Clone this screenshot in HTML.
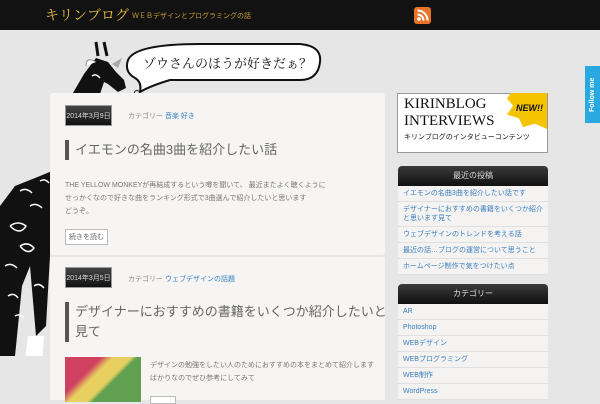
<!DOCTYPE html>
<html><head><meta charset="utf-8"><style>
*{margin:0;padding:0;box-sizing:border-box}
body{width:600px;height:400px;overflow:hidden;background:#e6e6e6;font-family:"Liberation Sans","Noto Sans CJK JP",sans-serif;position:relative}
.hdr{position:absolute;left:0;top:0;width:600px;height:30px;background:#121212}
.logo{position:absolute;left:45px;top:5px;color:#e8c040;font-family:"Liberation Serif","Noto Serif CJK SC",serif;font-size:14px;white-space:nowrap}
.tag{position:absolute;left:132px;top:11px;color:#c8a030;font-size:7px;white-space:nowrap}
.rss{position:absolute;left:414px;top:7px;width:17px;height:17px;background:#e8742a;border-radius:3px}
.box{position:absolute;left:50px;background:#f6f5f3;width:335px}
.date{position:absolute;background:linear-gradient(#444,#111);color:#ddd;font-size:7px;width:47px;height:21px;line-height:21px;text-align:center;border:1px solid #999;white-space:nowrap}
.meta{position:absolute;font-size:7px;color:#888;white-space:nowrap}
.meta a{color:#3a7ec0}
.ttl{position:absolute;border-left:4px solid #555;padding-left:6px;font-size:13px;color:#666;line-height:20px;white-space:nowrap}
.txt{position:absolute;font-size:7px;color:#777;line-height:13px;white-space:nowrap}
.btn{position:absolute;border:1px solid #bbb;font-size:7px;color:#666;padding:2px 3px;background:#fff;white-space:nowrap}
.wh{position:absolute;left:398px;width:150px;height:20px;background:linear-gradient(#3a3a3a,#111);border-radius:4px 4px 0 0;color:#ddd;font-size:8px;text-align:center;line-height:20px}
.wl{position:absolute;left:398px;width:150px;background:#f4f3f1}
.wl div{border-bottom:1px solid #e0e0e0;font-size:7px;color:#3a7ec0;padding:3px 5px;line-height:9px;white-space:nowrap}
</style></head><body>
<div class="hdr"></div>
<div class="logo">キリンブログ</div>
<div class="tag">ＷＥＢデザインとプログラミングの話</div>
<div class="rss"><svg width="17" height="17"><circle cx="5" cy="12" r="1.8" fill="#fff"/><path d="M3.5 7.5a6 6 0 0 1 6 6M3.5 3.5a10 10 0 0 1 10 10" stroke="#fff" stroke-width="2" fill="none"/></svg></div>
<svg style="position:absolute;left:0;top:36px" width="330" height="320">
<path d="M128 24 Q135 8 200 8 L300 8 Q322 10 320 26 Q318 44 300 44 L170 44 Q150 50 140 56 Q142 46 135 42 Q124 36 128 24Z" fill="#fff" stroke="#111" stroke-width="2"/>
<text x="143" y="32" font-family="Noto Serif CJK SC,serif" font-size="13" fill="#111">ゾウさんのほうが好きだぁ？</text>
<circle cx="126" cy="62" r="2" fill="none" stroke="#111"/><circle cx="131" cy="60" r="2" fill="none" stroke="#111"/><circle cx="137" cy="57" r="2.5" fill="none" stroke="#111"/>
<path d="M96 22 L108 26 L116 36 L124 44 L126 52 L118 56 L108 48 L104 46 L96 70 L75 100 L60 125 L52 135 L40 140 L15 150 L0 170 L0 330 L14 330 L22 250 L30 230 L36 300 L46 290 L50 220 L50 140 L70 62 L84 38 Z" fill="#111"/>
<path d="M104 6l3 14M96 6l2 14" stroke="#111" stroke-width="3"/>
<path d="M86 30 Q86 20 96 26" fill="#fff" stroke="#888"/>
<path d="M112 28 l10 -6 l-4 10z" fill="#aaa"/>
<path d="M10 190 q8 -6 16 0 q-6 10 -16 0 M20 210 q8 -5 14 2 q-6 8 -14 -2 M5 230 q6 -4 12 2 M30 170 q6 -4 12 2 M8 260 q6 -4 10 2 M34 250 q5 -4 10 2 M80 60 q5 -3 8 2 M70 80 q5 -3 9 2 M62 100 q5 -3 8 2 M20 155 q6 -4 12 2 M40 145 q5 -3 9 2 M15 280 q5 -3 9 2 M92 40 q4 -3 8 2" stroke="#fff" stroke-width="1.5" fill="none"/>
<path d="M28 300 l16 0 l-2 30 l-18 0z" fill="#fff"/>
</svg>
<div class="box" style="top:93px;height:162px;border-radius:3px">
<div class="date" style="left:15px;top:12px">2014年3月9日</div>
<div class="meta" style="left:78px;top:18px">カテゴリー <a>音楽 好き</a></div>
<div class="ttl" style="left:15px;top:47px">イエモンの名曲3曲を紹介したい話</div>
<div class="txt" style="left:15px;top:86px">THE YELLOW MONKEYが再結成するという噂を聞いて、 最近またよく聴くように<br>せっかくなので好きな曲をランキング形式で3曲選んで紹介したいと思います<br>どうぞ。</div>
<div class="btn" style="left:15px;top:136px">続きを読む</div>
</div>
<div class="box" style="top:257px;height:143px">
<div class="date" style="left:15px;top:10px">2014年3月5日</div>
<div class="meta" style="left:78px;top:17px">カテゴリー <a>ウェブデザインの話題</a></div>
<div class="ttl" style="left:15px;top:45px">デザイナーにおすすめの書籍をいくつか紹介したいと<br>見て</div>
<div style="position:absolute;left:15px;top:100px;width:76px;height:45px;background:linear-gradient(135deg,#d04060 30%,#e8d060 40%,#e8d060 55%,#60a050 60%)"></div>
<div class="txt" style="left:100px;top:102px">デザインの勉強をしたい人のためにおすすめの本をまとめて紹介します<br>ばかりなのでぜひ参考にしてみて</div>
<div class="btn" style="left:100px;top:139px;width:26px;height:8px"></div>
</div>
<div style="position:absolute;left:397px;top:93px;width:151px;height:60px;background:#fff;border:1px solid #999;font-family:'Liberation Serif',serif;font-size:15px;line-height:17px;padding:2px 6px;color:#111">KIRINBLOG<br>INTERVIEWS<div style="font-family:'Noto Sans CJK JP',sans-serif;font-size:7px;line-height:14px">キリンブログのインタビューコンテンツ</div></div>
<div style="position:absolute;left:507px;top:93px;width:40px;height:36px;background:#f4c400;clip-path:polygon(10% 0,100% 0,100% 100%,70% 85%,40% 95%,30% 70%,0 60%,15% 35%,0 15%);font:bold italic 9px 'Liberation Sans';color:#111;padding:10px 0 0 9px">NEW!!</div>
<div class="wh" style="top:166px">最近の投稿</div>
<div class="wl" style="top:186px;height:88px">
<div>イエモンの名曲3曲を紹介したい話です</div>
<div>デザイナーにおすすめの書籍をいくつか紹介<br>と思います見て</div>
<div>ウェブデザインのトレンドを考える話</div>
<div>最近の話…ブログの運営について思うこと</div>
<div>ホームページ制作で気をつけたい点</div>
</div>
<div class="wh" style="top:284px">カテゴリー</div>
<div class="wl" style="top:304px;height:96px">
<div>AR</div><div>Photoshop</div><div>WEBデザイン</div><div>WEBプログラミング</div><div>WEB制作</div><div>WordPress</div>
</div>
<div style="position:absolute;left:585px;top:66px;width:15px;height:57px;background:#2aa9e0;color:#fff;font:bold 7px 'Liberation Sans';writing-mode:vertical-rl;transform:rotate(180deg);text-align:center;line-height:15px">Follow me</div>
</body></html>
